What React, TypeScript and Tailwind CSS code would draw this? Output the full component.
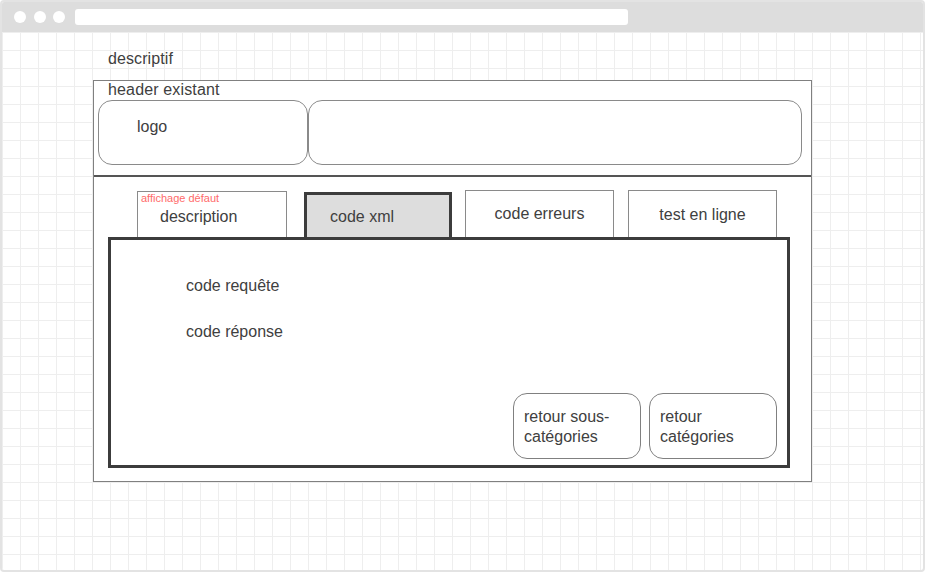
export default function App() {
  return (
    <div className="w-[925px] h-[572px] bg-white font-['Liberation_Sans',Arial,sans-serif] text-[#404040]">
      <div className="w-full h-full flex flex-col border-2 border-[#e3e3e3] rounded-[4px] overflow-hidden">
        {/* browser bar */}
        <div className="h-[30px] shrink-0 bg-[#dddddd] flex items-center pl-[12px]">
          <div className="w-[12px] h-[12px] rounded-full bg-white" />
          <div className="w-[12px] h-[12px] rounded-full bg-white ml-[8px]" />
          <div className="w-[12px] h-[12px] rounded-full bg-white ml-[7px]" />
          <div className="w-[553px] h-[16px] rounded-[3px] bg-white ml-[10px]" />
        </div>

        {/* canvas */}
        <div className="flex-1 pl-[91px] pt-[18px] bg-[linear-gradient(to_right,#eeeeee_1px,transparent_1px),linear-gradient(to_bottom,#eeeeee_1px,transparent_1px)] bg-[size:18px_18px]">
          <div className="ml-[15px] text-[16px] leading-[17px] tracking-[0.1px]">descriptif</div>

          <div className="mt-[13px] w-[719px] bg-white border border-[#808080]">
            {/* header */}
            <div className="ml-[14px] text-[16px] leading-[17px] tracking-[0.15px]">header existant</div>
            <div className="flex mt-[2px] ml-[4px]">
              <div className="w-[210px] h-[65px] rounded-[14px] border border-[#8a8a8a] pl-[38px] pt-[16px] text-[16px] leading-[19px]">
                logo
              </div>
              <div className="w-[494px] h-[65px] rounded-[14px] border border-[#8a8a8a]" />
            </div>
            <div className="mt-[10px] h-[2px] bg-[#555]" />

            {/* tabs */}
            <div className="h-[60px] flex items-end text-[16px]">
              <div className="ml-[43px] w-[150px] h-[46px] border border-b-0 border-[#8a8a8a] flex flex-col">
                <div className="pl-[3px] text-[11px] leading-[12px] text-[#ff6b6b]">affichage défaut</div>
                <div className="pl-[22px] mt-[4px] leading-[18px]">description</div>
              </div>
              <div className="ml-[17px] w-[148px] h-[45px] border-[3px] border-b-0 border-[#3c3c3c] bg-[#dddddd] flex items-center pl-[23px] pt-[2px]">
                code xml
              </div>
              <div className="ml-[13px] w-[149px] h-[47px] border border-b-0 border-[#8a8a8a] flex items-center justify-center">
                code erreurs
              </div>
              <div className="ml-[14px] w-[149px] h-[47px] border border-b-0 border-[#8a8a8a] flex items-center justify-center pt-[2px]">
                test en ligne
              </div>
            </div>

            {/* content */}
            <div className="ml-[14px] mb-[13px] w-[682px] h-[231px] border-[3px] border-[#3c3c3c] flex flex-col text-[16px]">
              <div className="pl-[75px] pt-[36px] leading-[19px]">code requête</div>
              <div className="pl-[75px] mt-[27px] leading-[19px]">code réponse</div>
              <div className="mt-auto flex justify-end gap-[8px] pr-[10px] pb-[6px]">
                <div className="w-[128px] h-[66px] rounded-[14px] border border-[#808080] flex items-center pl-[10px] pt-[2px] leading-[20px]">
                  retour sous-catégories
                </div>
                <div className="w-[128px] h-[66px] rounded-[14px] border border-[#808080] flex items-center pl-[10px] pt-[2px] leading-[20px]">
                  retour catégories
                </div>
              </div>
            </div>
          </div>
        </div>
      </div>
    </div>
  );
}
